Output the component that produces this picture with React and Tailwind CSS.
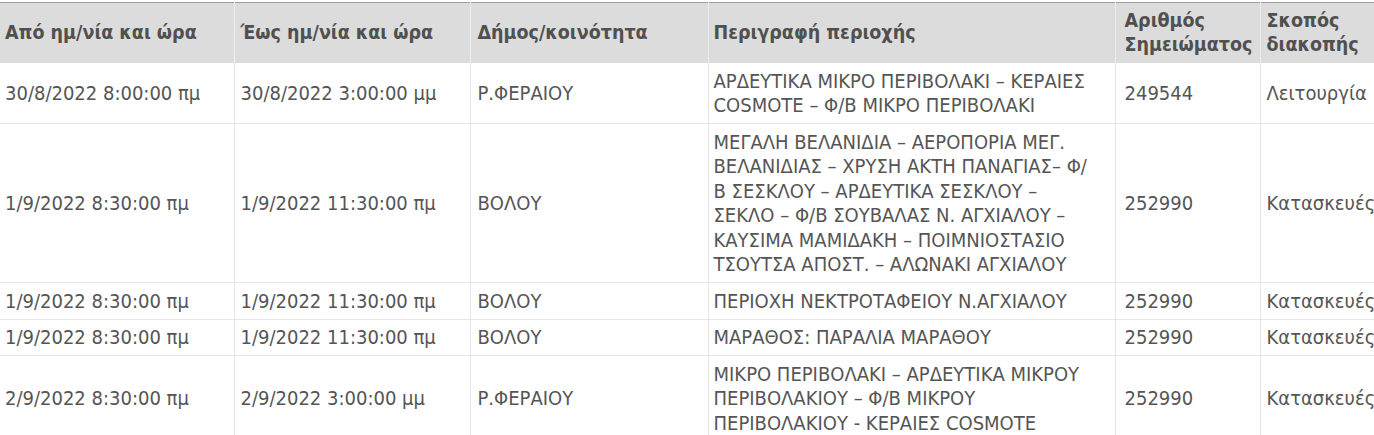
import React from 'react';

// area lines kept as they wrap in the source page
const rows = [
  {
    from: '30/8/2022 8:00:00 πμ',
    to: '30/8/2022 3:00:00 μμ',
    dimos: 'Ρ.ΦΕΡΑΙΟΥ',
    area: ['ΑΡΔΕΥΤΙΚΑ ΜΙΚΡΟ ΠΕΡΙΒΟΛΑΚΙ – ΚΕΡΑΙΕΣ', 'COSMOTE – Φ/Β ΜΙΚΡΟ ΠΕΡΙΒΟΛΑΚΙ'],
    note: '249544',
    reason: 'Λειτουργία',
  },
  {
    from: '1/9/2022 8:30:00 πμ',
    to: '1/9/2022 11:30:00 πμ',
    dimos: 'ΒΟΛΟΥ',
    area: [
      'ΜΕΓΑΛΗ ΒΕΛΑΝΙΔΙΑ – ΑΕΡΟΠΟΡΙΑ ΜΕΓ.',
      'ΒΕΛΑΝΙΔΙΑΣ – ΧΡΥΣΗ ΑΚΤΗ ΠΑΝΑΓΙΑΣ– Φ/',
      'Β ΣΕΣΚΛΟΥ – ΑΡΔΕΥΤΙΚΑ ΣΕΣΚΛΟΥ –',
      'ΣΕΚΛΟ – Φ/Β ΣΟΥΒΑΛΑΣ Ν. ΑΓΧΙΑΛΟΥ –',
      'ΚΑΥΣΙΜΑ ΜΑΜΙΔΑΚΗ – ΠΟΙΜΝΙΟΣΤΑΣΙΟ',
      'ΤΣΟΥΤΣΑ ΑΠΟΣΤ. – ΑΛΩΝΑΚΙ ΑΓΧΙΑΛΟΥ',
    ],
    note: '252990',
    reason: 'Κατασκευές',
  },
  {
    from: '1/9/2022 8:30:00 πμ',
    to: '1/9/2022 11:30:00 πμ',
    dimos: 'ΒΟΛΟΥ',
    area: ['ΠΕΡΙΟΧΗ ΝΕΚΤΡΟΤΑΦΕΙΟΥ Ν.ΑΓΧΙΑΛΟΥ'],
    note: '252990',
    reason: 'Κατασκευές',
  },
  {
    from: '1/9/2022 8:30:00 πμ',
    to: '1/9/2022 11:30:00 πμ',
    dimos: 'ΒΟΛΟΥ',
    area: ['ΜΑΡΑΘΟΣ: ΠΑΡΑΛΙΑ ΜΑΡΑΘΟΥ'],
    note: '252990',
    reason: 'Κατασκευές',
  },
  {
    from: '2/9/2022 8:30:00 πμ',
    to: '2/9/2022 3:00:00 μμ',
    dimos: 'Ρ.ΦΕΡΑΙΟΥ',
    area: ['ΜΙΚΡΟ ΠΕΡΙΒΟΛΑΚΙ – ΑΡΔΕΥΤΙΚΑ ΜΙΚΡΟΥ', 'ΠΕΡΙΒΟΛΑΚΙΟΥ – Φ/Β ΜΙΚΡΟΥ', 'ΠΕΡΙΒΟΛΑΚΙΟΥ - ΚΕΡΑΙΕΣ COSMOTE'],
    note: '252990',
    reason: 'Κατασκευές',
  },
];

const App = () => {
  return (
    <div
      className="w-[1374px] h-[435px] overflow-hidden bg-white pt-[2px]"
      style={{ fontFamily: '"DejaVu Sans Condensed", "DejaVu Sans", sans-serif' }}
    >
      <table className="table-fixed border-collapse w-[1420px] text-[#555555]">
        <colgroup>
          <col className="w-[234px]" />
          <col className="w-[236px]" />
          <col className="w-[238px]" />
          <col className="w-[407px]" />
          <col className="w-[145px]" />
          <col className="w-[160px]" />
        </colgroup>
        <thead>
          <tr className="bg-[#dcdcdc] border-t border-[#9c9c9c] text-[19.5px] font-bold leading-[24px] text-[#505050]">
            <th className="text-left px-[5px] pt-[6px] pb-[6px] border-r border-[#eeeeee] align-middle">Από ημ/νία και ώρα</th>
            <th className="text-left px-[6px] pt-[6px] pb-[6px] border-r border-[#eeeeee] align-middle">Έως ημ/νία και ώρα</th>
            <th className="text-left px-[7px] pt-[6px] pb-[6px] border-r border-[#eeeeee] align-middle">Δήμος/κοινότητα</th>
            <th className="text-left px-[5px] pt-[6px] pb-[6px] border-r border-[#eeeeee] align-middle">Περιγραφή περιοχής</th>
            <th className="text-left pl-[9px] pr-0 pt-[6px] pb-[6px] border-r border-[#eeeeee] align-middle">Αριθμός Σημειώματος</th>
            <th className="text-left px-[6px] pt-[6px] pb-[6px] align-middle">Σκοπός διακοπής</th>
          </tr>
        </thead>
        <tbody className="text-[20px] leading-[24.5px]">
          {rows.map((r, i) => (
            <tr key={i} className="border-b border-[#e6e6e6]">
              <td className="px-[5px] py-[5.5px] border-r border-[#e6e6e6] align-middle">{r.from}</td>
              <td className="px-[6px] py-[5.5px] border-r border-[#e6e6e6] align-middle">{r.to}</td>
              <td className="px-[7px] py-[5.5px] border-r border-[#e6e6e6] align-middle">{r.dimos}</td>
              <td className="pl-[5px] pr-[4px] py-[5.5px] border-r border-[#e6e6e6] align-middle">
                {r.area.map((line, j) => (
                  <div key={j} className="whitespace-nowrap">{line}</div>
                ))}
              </td>
              <td className="pl-[9px] pr-1 py-[5.5px] border-r border-[#e6e6e6] align-middle">{r.note}</td>
              <td className="px-[6px] py-[5.5px] align-middle whitespace-nowrap">{r.reason}</td>
            </tr>
          ))}
        </tbody>
      </table>
    </div>
  );
};

export default App;
